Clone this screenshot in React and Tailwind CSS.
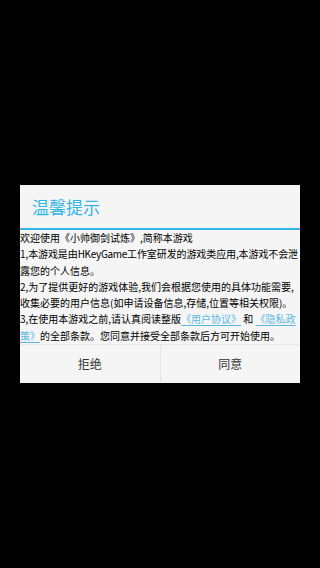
export default function App() {
  const font = { fontFamily: '"Noto Sans CJK SC", "Noto Sans", sans-serif' };
  const link = 'text-[#5ab8e6] underline underline-offset-2';
  return (
    <div className="h-[568px] w-[320px] bg-black pt-[185px]" style={font}>
      <div className="mx-[20px] w-[280px] bg-[#f5f5f5]">
        <div className="flex h-[43px] items-center pl-[12px] text-[17px] text-[#33b5e5]">温馨提示</div>
        <div className="h-[2px] bg-[#33b5e5]" />
        <div className="whitespace-nowrap text-[10px] leading-[16.3px] text-black">
          <div>欢迎使用《小帅御剑试炼》,简称本游戏</div>
          <div className="tracking-[-0.1px]">
            1,本游戏是由<span className="tracking-[-0.3px]">HKeyGame</span>工作室研发的游戏类应用,本游戏不会泄
          </div>
          <div>露您的个人信息。</div>
          <div>2,为了提供更好的游戏体验,我们会根据您使用的具体功能需要,</div>
          <div>收集必要的用户信息(如申请设备信息,存储,位置等相关权限)。</div>
          <div>
            3,在使用本游戏之前,请认真阅读整版<span className={link}>《用户协议》</span> 和 <span className={link}>《隐私政</span>
          </div>
          <div>
            <span className={link}>策》</span>的全部条款。您同意并接受全部条款后方可开始使用。
          </div>
        </div>
        <div className="flex h-[39px] border-t border-[#e6e6e6] text-[12px] text-[#333]">
          <button className="flex flex-1 items-center justify-center border-r border-[#e6e6e6]">拒绝</button>
          <button className="flex flex-1 items-center justify-center">同意</button>
        </div>
      </div>
    </div>
  );
}
